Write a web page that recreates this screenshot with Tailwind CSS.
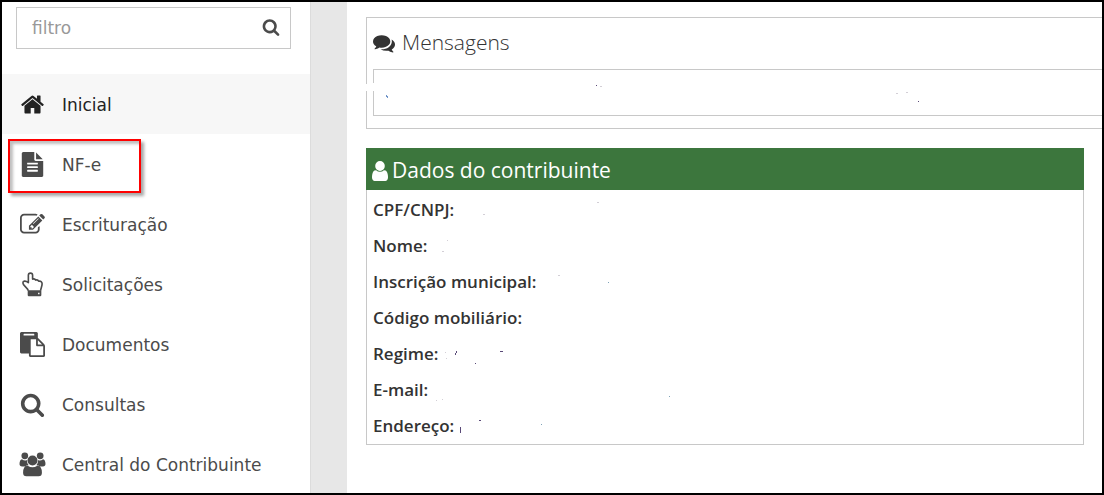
<!DOCTYPE html>
<html lang="pt-BR">
<head>
<meta charset="utf-8">
<meta name="viewport" content="width=device-width, initial-scale=1">
<title>Portal do contribuinte</title>
<script src="https://cdn.jsdelivr.net/npm/@tailwindcss/browser@4"></script>
</head>
<body class="bg-white">
<div class="relative flex h-screen overflow-hidden border-2 border-black bg-white">
  <aside class="w-[308px] shrink-0 font-['DejaVu_Sans',sans-serif] text-[17px] text-[#4b4b4b]">
    <form class="mt-[5px] mr-[19px] mb-[25px] ml-3.5 flex h-[42px] items-center border border-[#c8c8c8] pr-2.5 pl-[15px]">
      <input type="text" aria-label="filtro" placeholder="filtro" class="min-w-0 flex-1 bg-transparent pt-0.5 outline-none placeholder:text-[#999]">
      <button type="button" aria-label="Buscar" class="pb-0.5">
        <svg class="size-[18px]" viewBox="0 0 1792 1792" fill="currentColor"><path d="M1216 832q0-185-131.500-316.500t-316.500-131.500-316.500 131.500-131.500 316.500 131.500 316.500 316.500 131.500 316.500-131.500 131.500-316.500zm512 832q0 52-38 90t-90 38q-54 0-90-38l-343-342q-179 124-399 124-143 0-273.500-55.500t-225-150-150-225-55.500-273.500 55.500-273.500 150-225 225-150 273.500-55.500 273.500 55.500 225 150 150 225 55.500 273.500q0 220-124 399l343 343q37 37 37 90z"/></svg>
      </button>
    </form>
    <nav>
      <a href="#" class="flex h-[60px] items-center gap-[17px] bg-[#f7f7f7] pl-[18px] text-[#222]">
        <svg class="size-[25px]" viewBox="0 0 1792 1792" fill="currentColor"><path d="M1472 992v480q0 26-19 45t-45 19h-384v-384h-256v384h-384q-26 0-45-19t-19-45v-480q0-1 .5-3t.5-3l575-474 575 474q1 2 1 6zm223-69l-62 74q-8 9-21 11h-3q-13 0-21-7l-692-577-692 577q-12 8-24 7-13-2-21-11l-62-74q-8-10-7-23.500t11-21.500l719-599q32-26 76-26t76 26l244 204v-195q0-14 9-23t23-9h192q14 0 23 9t9 23v408l219 182q10 8 11 21.500t-7 23.500z"/></svg>
        <span class="pt-[3px]">Inicial</span></a>
      <a href="#" class="relative flex h-[60px] items-center gap-[17px] pl-[18px]">
        <svg class="size-[25px]" viewBox="0 0 1792 1792" fill="currentColor"><path d="M1596 476q14 14 28 36h-472v-472q22 14 36 28zm-476 164h544v1056q0 40-28 68t-68 28h-1344q-40 0-68-28t-28-68v-1600q0-40 28-68t68-28h800v544q0 40 28 68t68 28zm160 736v-64q0-14-9-23t-23-9h-704q-14 0-23 9t-9 23v64q0 14 9 23t23 9h704q14 0 23-9t9-23zm0-256v-64q0-14-9-23t-23-9h-704q-14 0-23 9t-9 23v64q0 14 9 23t23 9h704q14 0 23-9t9-23zm0-256v-64q0-14-9-23t-23-9h-704q-14 0-23 9t-9 23v64q0 14 9 23t23 9h704q14 0 23-9t9-23z"/></svg>
        <span class="pt-[3px]">NF-e</span>
        <span class="absolute top-[5px] left-1.5 h-[54px] w-[133px] border-2 border-[#f00] shadow-[3px_3px_3px_rgba(0,0,0,0.35),inset_3px_3px_3px_rgba(0,0,0,0.25)]"></span></a>
      <a href="#" class="flex h-[60px] items-center gap-[17px] pl-[18px]">
        <svg class="size-[25px]" viewBox="0 0 1792 1792" fill="currentColor"><path d="M888 1184l116-116-152-152-116 116v56h96v96h56zm440-720q-16-16-33 1l-350 350q-17 17-1 33t33-1l350-350q17-17 1-33zm80 594v190q0 119-84.500 203.500t-203.500 84.500h-832q-119 0-203.500-84.500t-84.500-203.500v-832q0-119 84.500-203.500t203.500-84.500h832q63 0 117 25 15 7 18 23 3 17-9 29l-49 49q-14 14-32 8-23-6-45-6h-832q-66 0-113 47t-47 113v832q0 66 47 113t113 47h832q66 0 113-47t47-113v-126q0-13 9-22l64-64q15-15 35-7t20 29zm-96-738l288 288-672 672h-288v-288zm444 132l-92 92-288-288 92-92q28-28 68-28t68 28l152 152q28 28 28 68t-28 68z"/></svg>
        <span class="pt-[3px]">Escrituração</span></a>
      <a href="#" class="flex h-[60px] items-center gap-[17px] pl-[18px]">
        <svg class="size-[25px]" viewBox="0 0 26 26"><path d="M8.500 19.500C8.500 16.500 3 14.500 3 11.500C3 9.200 5.600 8.700 8.700 11V3.500C8.700 0.400 13.100 0.400 13.100 3.500V7.400C14.500 6.900 15.800 7.400 16.300 8.400C17.600 7.900 18.900 8.500 19.400 9.600C21.500 9 23 10.300 23 12.300C23 15 21.600 16.700 21.400 19.500" fill="none" stroke="currentColor" stroke-width="1.700" stroke-linejoin="round"/><path fill="currentColor" fill-rule="evenodd" d="M9 19h12.200q1 0 1 1v4q0 1.300-1.200 1.300H9.200Q8 25.300 8 24v-4q0-1 1-1zm9.800 2.700v1.500h1.500v-1.500z"/></svg>
        <span class="pt-[3px]">Solicitações</span></a>
      <a href="#" class="flex h-[60px] items-center gap-[17px] pl-[18px]">
        <svg class="size-[25px]" viewBox="0 0 1792 1792" fill="currentColor"><path d="M768 1664h896v-640h-416q-40 0-68-28t-28-68v-416h-384v1152zm256-1440v-64q0-13-9.500-22.500t-22.500-9.500h-704q-13 0-22.500 9.500t-9.500 22.500v64q0 13 9.500 22.500t22.500 9.500h704q13 0 22.500-9.500t9.500-22.500zm256 672h299l-299-299v299zm512 128v672q0 40-28 68t-68 28h-960q-40 0-68-28t-28-68v-160h-544q-40 0-68-28t-28-68v-1344q0-40 28-68t68-28h1088q40 0 68 28t28 68v328q21 13 36 28l408 408q28 28 48 76t20 88z"/></svg>
        <span class="pt-[3px]">Documentos</span></a>
      <a href="#" class="flex h-[60px] items-center gap-[17px] pl-[18px]">
        <svg class="size-[25px]" viewBox="0 0 1792 1792" fill="currentColor"><path d="M1216 832q0-185-131.500-316.500t-316.500-131.500-316.500 131.500-131.500 316.500 131.500 316.500 316.500 131.500 316.500-131.500 131.500-316.500zm512 832q0 52-38 90t-90 38q-54 0-90-38l-343-342q-179 124-399 124-143 0-273.500-55.500t-225-150-150-225-55.500-273.500 55.500-273.500 150-225 225-150 273.500-55.500 273.500 55.500 225 150 150 225 55.500 273.500q0 220-124 399l343 343q37 37 37 90z"/></svg>
        <span class="pt-[3px]">Consultas</span></a>
      <a href="#" class="flex h-[60px] items-center gap-[17px] pl-[18px]">
        <svg class="size-[25px] overflow-visible" viewBox="0 0 26 26" fill="currentColor"><circle cx="5" cy="4" r="3.500"/><circle cx="21" cy="4" r="3.500"/><circle cx="13" cy="8.800" r="5.200"/><path d="M2 7.500Q5 9.600 7.200 8.200Q7 11.500 9 13.800Q7 13.700 5.500 15H2.200Q-0.500 15-0.500 12.500Q-0.500 8 2 7.500zM24 7.500Q21 9.600 18.800 8.200Q19 11.500 17 13.800Q19 13.700 20.500 15H23.800Q26.500 15 26.500 12.500Q26.500 8 24 7.500zM8 14.300Q13 17.500 18 14.300Q22.800 14.600 22.800 21.500Q22.800 25.200 19.300 25.200H6.700Q3.200 25.200 3.200 21.500Q3.200 14.600 8 14.300z"/></svg>
        <span class="pt-[3px]">Central do Contribuinte</span></a>
    </nav>
  </aside>
  <div class="w-[37px] shrink-0 border-l border-[#dcdcdc] bg-[#e7e7e7]"></div>
  <main class="min-w-0 flex-1 pt-[15px] pl-[19px] font-['Open_Sans',sans-serif] text-[#333]">
    <section class="border-y border-l border-[#c8c8c8] pb-3 pl-1.5">
      <h2 class="flex h-[51px] items-center gap-[7px] pb-0.5 text-[21px] font-light">
        <svg class="size-[22px]" viewBox="0 0 1792 1792" fill="currentColor"><path d="M1408 768q0 139-94 257t-256.500 186.500-353.500 68.500q-86 0-176-16-124 88-278 128-36 9-86 16h-3q-11 0-20.500-8t-11.500-21q-1-3-1-6.500t.5-6.500 2-6l2.500-5 3.500-5.500 4-5 4.500-5 4-4.500q5-6 23-25t26-29.500 22.500-29 25-38.500 20.500-44q-124-72-195-177t-71-224q0-139 94-257t256.500-186.500 353.500-68.500 353.500 68.500 256.500 186.500 94 257zm384 256q0 120-71 224.500t-195 176.500q10 24 20.500 44t25 38.500 22.500 29 26 29.500 23 25q1 1 4 4.500t4.500 5 4 5 3.500 5.500l2.500 5 2 6 .5 6.500-1 6.500q-3 14-13 22t-22 7q-50-7-86-16-154-40-278-128-90 16-176 16-271 0-472-132 58 4 88 4 161 0 309-45t264-129q125-92 192-212t67-254q0-77-23-152 129 71 204 178t75 230z"/></svg>
        Mensagens</h2>
      <div class="h-[47px] border-y border-l border-[#c8c8c8]"></div>
    </section>
    <section class="mt-[19px] mr-[18px]">
      <h2 class="flex h-[42px] items-center gap-1 bg-[#3c763d] pt-[3px] pl-1.5 text-[21px] text-white">
        <svg class="h-5 w-4" viewBox="256 128 1280 1536" preserveAspectRatio="none" fill="currentColor"><path d="M1536 1399q0 109-62.500 187t-150.500 78h-854q-88 0-150.500-78t-62.500-187q0-85 8.500-160.500t31.500-152 58.500-131 94-89 134.500-34.500q131 128 313 128t313-128q76 0 134.500 34.500t94 89 58.500 131 31.500 152 8.500 160.500zm-256-887q0 159-112.500 271.500t-271.500 112.500-271.500-112.500-112.500-271.500 112.500-271.500 271.500-112.500 271.500 112.500 112.500 271.500z"/></svg>
        Dados do contribuinte</h2>
      <dl class="border-x border-b border-[#c8c8c8] pt-0.5 pl-1.5 text-[17px] leading-9 font-semibold">
        <dt>CPF/CNPJ:</dt>
        <dt>Nome:</dt>
        <dt>Inscrição municipal:</dt>
        <dt>Código mobiliário:</dt>
        <dt>Regime:</dt>
        <dt>E-mail:</dt>
        <dt>Endereço:</dt>
      </dl>
    </section>
  </main>
  <!-- Traces left by the erased personal data -->
  <svg class="pointer-events-none absolute -top-0.5 -left-0.5" width="1104" height="495" viewBox="0 0 1104 495" shape-rendering="crispEdges" aria-hidden="true">
    <path fill="#fff" d="M366 84h8v7h-8zM373 83h1v8h-1z"/>
    <path fill="#5a4a78" d="M596 85h1v1h-1zM918 101h1v1h-1zM500 351h3v1h-3zM479 420h2v1h-2zM475 363h1v1h-1zM460 427h1v6h-1zM456 351h1v2h-1zM455 353h1v2h-1z"/>
    <path fill="#6d92c8" d="M386 95h1v2h-1zM387 96h1v2h-1z"/>
    <path fill="#d3cfd6" d="M600 86h2v1h-2zM906 92h2v1h-2zM896 93h2v1h-2zM483 214h2v1h-2zM597 202h2v1h-2zM447 240h1v1h-1zM442 251h2v1h-2zM558 275h2v1h-2zM445 352h1v1h-1zM446 358h1v1h-1zM436 400h1v1h-1zM442 399h1v1h-1z"/>
    <path fill="#7fa3b8" d="M608 282h1v1h-1zM669 396h1v1h-1zM541 424h1v1h-1z"/>
  </svg>
</div>
</body>
</html>
